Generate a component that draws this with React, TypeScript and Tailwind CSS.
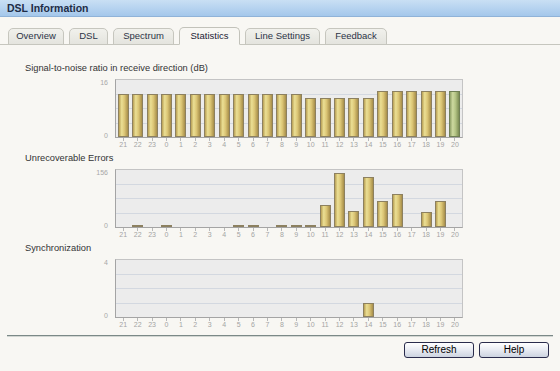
import React from "react";

const hours = [21, 22, 23, 0, 1, 2, 3, 4, 5, 6, 7, 8, 9, 10, 11, 12, 13, 14, 15, 16, 17, 18, 19, 20];

const snr = [12, 12, 12, 12, 12, 12, 12, 12, 12, 12, 12, 12, 12, 11, 11, 11, 11, 11, 13, 13, 13, 13, 13, 13];
const errors = [0, 3, 0, 3, 0, 0, 0, 0, 1, 1, 0, 1, 1, 4, 61, 148, 43, 137, 70, 91, 0, 41, 70, 0];
const sync = [0, 0, 0, 0, 0, 0, 0, 0, 0, 0, 0, 0, 0, 0, 0, 0, 0, 1, 0, 0, 0, 0, 0, 0];

const tabs = [
  { name: "Overview", w: "w-[56px]" },
  { name: "DSL", w: "w-[39px]" },
  { name: "Spectrum", w: "w-[61px]" },
  { name: "Statistics", w: "w-[61px]", active: true },
  { name: "Line Settings", w: "w-[75px]" },
  { name: "Feedback", w: "w-[62px]" },
];

function Chart({ title, max, values, greenLast }: { title: string; max: number; values: number[]; greenLast?: boolean }) {
  return (
    <div className="h-[90px] flex flex-col">
      <div className="h-[14px] pl-[25px] text-[9.3px] leading-[14px] text-[#333333]">{title}</div>
      <div className="mt-[4px] flex h-[59px]">
        <div className="w-[115px] flex flex-col justify-between items-end pr-[7px] text-[7px] leading-[8px] text-[#a8a8a8]">
          <span>{max}</span>
          <span className="-mb-[2px]">0</span>
        </div>
        <div className="w-[348px] h-[59px] border border-[#c4c4c4] border-l-[#a4a4a4] border-b-[#a4a4a4] bg-[#ececec] bg-[linear-gradient(to_bottom,transparent_14px,#d3d8e0_14px,#d3d8e0_15px,transparent_15px,transparent_28px,#d3d8e0_28px,#d3d8e0_29px,transparent_29px,transparent_43px,#d3d8e0_43px,#d3d8e0_44px,transparent_44px)] flex items-end">
          {values.map((v, i) => {
            const h = v === 0 ? 0 : Math.max(2, Math.round((v / max) * 57));
            const green = greenLast && i === values.length - 1;
            return (
              <div key={i} className="flex-1 flex justify-center items-end h-full">
                {h > 0 && (
                  <div
                    className={
                      green
                        ? "w-[11px] border border-[#6f7f55] bg-[linear-gradient(to_right,#8fa067_0%,#cdd9a0_30%,#b4c485_60%,#7b8c55_100%)]"
                        : "w-[11px] border border-[#8c8060] bg-[linear-gradient(to_right,#b9a055_0%,#ebdf94_30%,#dcc676_60%,#a78e4a_100%)]"
                    }
                    style={{ height: h }}
                  />
                )}
              </div>
            );
          })}
        </div>
      </div>
      <div className="ml-[116px] w-[346px] flex">
        {hours.map((h) => (
          <div key={h} className="flex-1 flex flex-col items-center">
            <div className="w-px h-[3px] bg-[#b8b8b8]" />
            <span className="text-[7px] leading-[8px] text-[#a4a4a4]">{h}</span>
          </div>
        ))}
      </div>
    </div>
  );
}

export default function App() {
  return (
    <div className="w-[560px] h-[371px] overflow-hidden bg-[#f8f7f3] font-[Liberation_Sans,Arial,sans-serif] flex flex-col">
      <div className="h-[17px] shrink-0 bg-[linear-gradient(to_bottom,#c9dff4,#a4c7eb)] border-b border-[#90b3d8] pl-[7px] text-[10.5px] leading-[16px] font-bold text-[#1e2c46]">
        DSL Information
      </div>
      <div className="h-[28px] shrink-0 flex items-end pl-[8px] gap-[5px] border-b border-[#c6c6be]">
        {tabs.map((t) => (
          <div
            key={t.name}
            className={
              t.active
                ? `${t.w} h-[18px] -mb-px rounded-t-[5px] border border-[#c2c2ba] border-b-[#f8f7f3] bg-[#f8f7f3] flex items-center justify-center text-[9.5px] text-[#1c2233]`
                : `${t.w} h-[17px] -mb-px rounded-t-[5px] border border-[#c6c6be] bg-[linear-gradient(to_bottom,#f1f1ec,#e4e4de)] flex items-center justify-center text-[9.5px] text-[#2c3446]`
            }
          >
            {t.name}
          </div>
        ))}
      </div>
      <div className="pt-[16px] flex flex-col">
        <Chart title="Signal-to-noise ratio in receive direction (dB)" max={16} values={snr} greenLast />
        <Chart title="Unrecoverable Errors" max={156} values={errors} />
        <Chart title="Synchronization" max={4} values={sync} />
      </div>
      <div className="mt-[4px] mx-[7px] border-t border-[#7b8987] border-b border-b-[#d2d6d2]" />
      <div className="mt-[5px] flex justify-end gap-[5px] pr-[11px]">
        <button className="w-[70px] h-[16px] rounded-[3px] border border-[#2a2c4c] bg-[linear-gradient(to_bottom,#ffffff,#e8ebf2_50%,#cdd4e0)] text-[10px] leading-[14px] text-black">
          Refresh
        </button>
        <button className="w-[70px] h-[16px] rounded-[3px] border border-[#2a2c4c] bg-[linear-gradient(to_bottom,#ffffff,#e8ebf2_50%,#cdd4e0)] text-[10px] leading-[14px] text-black">
          Help
        </button>
      </div>
    </div>
  );
}
